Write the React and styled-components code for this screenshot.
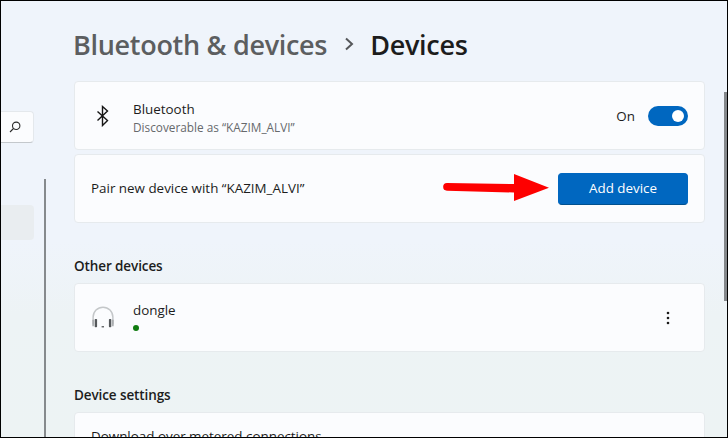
import React from "react";
import styled, { createGlobalStyle } from "styled-components";

const Global = createGlobalStyle`
  html, body { margin: 0; padding: 0; background: #000; }
  body { font-family: "Open Sans", "Noto Sans", sans-serif; }
  * { box-sizing: border-box; }
`;

const Window = styled.div`
  position: relative;
  width: 728px;
  height: 438px;
  overflow: hidden;
  border: 1px solid #000;
  background: linear-gradient(180deg, #eff4fb 0%, #eff4fb 55%, #edf3f5 72%, #edf3f4 100%);
  display: flex;
`;

const Sidebar = styled.aside`
  width: 33px;
  flex: none;
  padding-top: 110px;
  display: flex;
  flex-direction: column;
  gap: 62px;
`;

const Search = styled.div`
  height: 32px;
  background: #fbfcfe;
  border: 1px solid #e4e8ec;
  border-left: none;
  border-bottom-color: #c4c8cc;
  border-radius: 0 4px 4px 0;
  display: flex;
  align-items: center;
  justify-content: flex-end;
  padding-right: 12px;
`;

const Selected = styled.div`
  height: 35px;
  background: #e9edf0;
  border-radius: 0 4px 4px 0;
`;

const SideScroll = styled.div`
  width: 2px;
  flex: none;
  margin: 178px 0 0 10px;
  background: #868a8d;
`;

const Main = styled.main`
  width: 631px;
  flex: none;
  margin-left: 28px;
  padding-top: 25px;
`;

const Crumbs = styled.div`
  display: flex;
  align-items: center;
  height: 36px;
  margin: 0 0 19px -1px;
  font-size: 27px;
  font-weight: 600;
  letter-spacing: -0.3px;
  white-space: nowrap;
`;

const CrumbParent = styled.span`color: #5c5e60;`;
const CrumbSep = styled.span`display: flex; margin: 0 16px;`;
const CrumbCurrent = styled.span`color: #1c1c1c;`;

const Card = styled.section`
  height: 69px;
  margin-bottom: ${(p) => p.$mb || 0}px;
  background: #fbfcfe;
  border: 1px solid #e6eaed;
  border-radius: 4px;
  display: flex;
  align-items: center;
  padding: 0 16px;
  font-size: 13.4px;
  color: #1c1c1c;
`;

const CardIcon = styled.div`
  width: 24px;
  margin-right: 18px;
  flex: none;
  display: flex;
  justify-content: center;
`;

const CardText = styled.div`
  flex: 1;
  display: flex;
  flex-direction: column;
  padding-top: ${(p) => p.$pt || 0}px;
`;

const CardTitle = styled.div`
  line-height: 18px;
  white-space: nowrap;
`;

const CardSub = styled.div`
  font-size: 11.8px;
  line-height: 18px;
  color: #66696c;
  white-space: nowrap;
`;

const StatusDot = styled.div`
  width: 6px;
  height: 6px;
  margin: 6px 0 3px;
  border-radius: 50%;
  background: #107c10;
`;

const ToggleLabel = styled.span`
  margin-right: 13px;
`;

const Toggle = styled.div`
  width: 40px;
  height: 20px;
  border-radius: 10px;
  background: #0067c0;
  display: flex;
  align-items: center;
  justify-content: flex-end;
  padding-right: 4px;
`;

const Knob = styled.div`
  width: 12px;
  height: 12px;
  border-radius: 50%;
  background: #fff;
`;

const Arrow = styled.svg`
  position: absolute;
  left: 442px;
  top: 172px;
`;

const AddButton = styled.button`
  width: 130px;
  height: 32px;
  border: 1px solid #0067c0;
  border-bottom-color: #00508f;
  border-radius: 4px;
  background: #0067c0;
  color: #fff;
  font: inherit;
  padding: 0 0 2px;
`;

const Spacer = styled.div`flex: 1;`;

const PairText = styled.div`
  white-space: nowrap;
  padding-bottom: 1px;
`;

const More = styled.div`
  display: flex;
  margin-right: 18px;
`;

const SectionTitle = styled.h2`
  margin: 0 0 9px;
  height: 18px;
  line-height: 20px;
  font-size: 13.5px;
  font-weight: 600;
  color: #1c1c1c;
  letter-spacing: -0.1px;
`;

const ClippedCard = styled.section`
  height: 60px;
  background: #fbfcfe;
  border: 1px solid #e6eaed;
  border-radius: 4px;
  padding: 14px 16px 0;
  font-size: 13.4px;
  line-height: 18px;
  color: #1c1c1c;
  white-space: nowrap;
`;

const ScrollThumb = styled.div`
  position: absolute;
  left: 723px;
  top: 91px;
  width: 2.5px;
  height: 209px;
  background: #85888b;
`;

const Bluetooth = () => (
  <svg width="16" height="22" viewBox="0 0 16 22" fill="none" stroke="#161616" strokeWidth="1.4">
    <path d="M2.5 6.5 L12.5 15.5 L7.5 20.5 V1.5 L12.5 6 L2.5 15.5" strokeLinejoin="miter" />
  </svg>
);

const Headphones = () => (
  <svg width="26" height="26" viewBox="0 0 26 26" fill="none">
    <path d="M2.3 20 V12 A10.7 10.7 0 0 1 23.7 12 V20" stroke="#c4c7c9" strokeWidth="1.6" />
    <path d="M2.3 22 V15 M23.7 22 V15" stroke="#a4a7aa" strokeWidth="1.6" />
    <rect x="4" y="14" width="2.6" height="9" rx="0.8" fill="#55585b" />
    <rect x="19.4" y="14" width="2.6" height="9" rx="0.8" fill="#55585b" />
    <rect x="11.5" y="21.8" width="2.6" height="1.4" fill="#55585b" />
  </svg>
);

export default function App() {
  return (
    <>
      <Global />
      <Window>
        <Sidebar>
          <Search>
            <svg width="12" height="12" viewBox="0 0 12 12" fill="none" stroke="#2a2a2a" strokeWidth="1.1">
              <circle cx="7.2" cy="4.8" r="3.7" />
              <path d="M4.5 7.5 L1 11" />
            </svg>
          </Search>
          <Selected />
        </Sidebar>
        <SideScroll />
        <Main>
          <Crumbs>
            <CrumbParent>Bluetooth &amp; devices</CrumbParent>
            <CrumbSep>
              <svg width="11" height="14" viewBox="0 0 11 14" fill="none" stroke="#55575a" strokeWidth="2">
                <path d="M3 1.5 L9 7 L3 12.5" />
              </svg>
            </CrumbSep>
            <CrumbCurrent>Devices</CrumbCurrent>
          </Crumbs>
          <Card $mb={4}>
            <CardIcon><Bluetooth /></CardIcon>
            <CardText $pt={4}>
              <CardTitle>Bluetooth</CardTitle>
              <CardSub>Discoverable as “KAZIM_ALVI”</CardSub>
            </CardText>
            <ToggleLabel>On</ToggleLabel>
            <Toggle><Knob /></Toggle>
          </Card>
          <Card $mb={33}>
            <PairText>Pair new device with “KAZIM_ALVI”</PairText>
            <Spacer />
            <AddButton>Add device</AddButton>
          </Card>
          <SectionTitle>Other devices</SectionTitle>
          <Card $mb={33}>
            <CardIcon><Headphones /></CardIcon>
            <CardText>
              <CardTitle>dongle</CardTitle>
              <StatusDot />
            </CardText>
            <More>
              <svg width="4" height="14" viewBox="0 0 4 14" fill="#1a1a1a">
                <circle cx="2" cy="2" r="1.3" />
                <circle cx="2" cy="7" r="1.3" />
                <circle cx="2" cy="12" r="1.3" />
              </svg>
            </More>
          </Card>
          <SectionTitle>Device settings</SectionTitle>
          <ClippedCard>Download over metered connections</ClippedCard>
        </Main>
        <Arrow width="110" height="32" viewBox="0 0 110 32">
          <path d="M4 10 L71 11 V1 L106 14.7 L71 28 V19.5 L4 17.7 A3.85 3.85 0 0 1 4 10 Z" fill="#fe0000" />
        </Arrow>
        <ScrollThumb />
      </Window>
    </>
  );
}
